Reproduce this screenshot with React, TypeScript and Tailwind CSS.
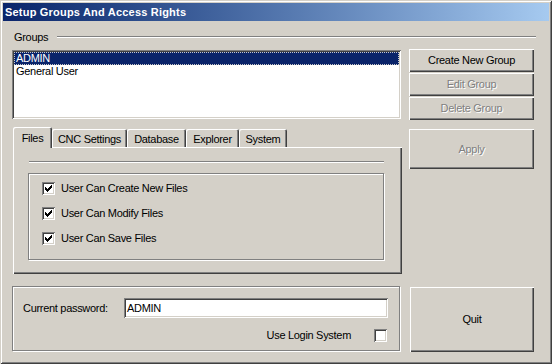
import React from "react";

const CheckMark = () => (
  <svg width="7" height="7" viewBox="0 0 7 7" shapeRendering="crispEdges">
    <path
      fill="#000"
      d="M6 0h1v1h-1z M5 1h2v1h-2z M0 2h1v1h-1z M4 2h3v1h-3z M0 3h2v1h-2z M3 3h3v1h-3z M0 4h5v1h-5z M1 5h3v1h-3z M2 6h1v1h-1z"
    />
  </svg>
);

function CheckBox({ checked }: { checked: boolean }) {
  return (
    <div className="w-[13px] h-[13px] shrink-0 bg-white shadow-[inset_1px_1px_#808080,inset_-1px_-1px_#ffffff,inset_2px_2px_#404040,inset_-2px_-2px_#d4d0c8] flex items-center justify-center">
      {checked && <CheckMark />}
    </div>
  );
}

function Btn({ label, disabled, cls }: { label: string; disabled?: boolean; cls: string }) {
  return (
    <div
      className={`flex items-center justify-center bg-[#d4d0c8] shadow-[inset_1px_1px_#ffffff,inset_-1px_-1px_#404040,inset_-2px_-2px_#808080] ${cls} ${
        disabled ? "text-[#808080] [text-shadow:1px_1px_#ffffff]" : "text-black"
      }`}
    >
      {label}
    </div>
  );
}

function Tab({ label, w }: { label: string; w: string }) {
  return (
    <div
      className={`${w} h-[18px] flex items-center justify-center pt-[3px] bg-[#d4d0c8] rounded-t-[2px] shadow-[inset_1px_1px_#ffffff,inset_-1px_0_#404040,inset_-2px_0_#808080]`}
    >
      {label}
    </div>
  );
}

export default function App() {
  return (
    <div className="w-[552px] h-[364px] bg-[#d4d0c8] p-[3px] shadow-[inset_1px_1px_#d4d0c8,inset_-1px_-1px_#404040,inset_2px_2px_#ffffff,inset_-2px_-2px_#808080] font-['Liberation_Sans',Arial,sans-serif] text-[11px] leading-[13px] tracking-[-0.3px] text-black overflow-hidden">
      {/* Title bar */}
      <div className="h-[18px] bg-linear-to-r from-[#0a246a] to-[#a6caf0] flex items-center pl-[2px] text-white font-bold text-[11px] tracking-[0.2px]">
        Setup Groups And Access Rights
      </div>

      <div className="pl-[9px]">
        {/* Groups header */}
        <div className="mt-[9px] h-[13px] w-[524px] flex items-center">
          <span className="ml-[2px] pt-[1px]">Groups</span>
          <div className="ml-[9px] flex-1 h-[2px] border-t border-b border-t-[#808080] border-b-white" />
        </div>

        {/* List + buttons */}
        <div className="mt-[6px] flex">
          <div className="mt-[1px] w-[389px] h-[69px] bg-white p-[2px] shadow-[inset_1px_1px_#808080,inset_-1px_-1px_#ffffff,inset_2px_2px_#404040,inset_-2px_-2px_#d4d0c8]">
            <div className="h-[13px] bg-[#0a246a] text-white pl-[2px] outline-1 outline-dotted outline-[#c8c8c8] -outline-offset-1 flex items-center">
              ADMIN
            </div>
            <div className="h-[13px] pl-[2px] flex items-center">General User</div>
          </div>
          <div className="ml-[8px] w-[125px] flex flex-col gap-[1px]">
            <Btn label="Create New Group" cls="h-[23px]" />
            <Btn label="Edit Group" disabled cls="h-[23px]" />
            <Btn label="Delete Group" disabled cls="h-[23px]" />
          </div>
        </div>

        {/* Tabs + Apply */}
        <div className="mt-[7px] flex items-start">
          <div className="ml-[1px] w-[389px] flex flex-col">
            <div className="h-[20px] flex items-end">
              <div className="relative z-10 w-[39px] h-[21px] -mb-[1px] flex items-center justify-center pt-[1px] bg-[#d4d0c8] rounded-t-[2px] shadow-[inset_1px_1px_#ffffff,inset_-1px_0_#404040,inset_-2px_0_#808080]">
                Files
              </div>
              <Tab label="CNC Settings" w="w-[75px]" />
              <Tab label="Database" w="w-[59px]" />
              <Tab label="Explorer" w="w-[53px]" />
              <Tab label="System" w="w-[48px]" />
            </div>
            <div className="h-[127px] bg-[#d4d0c8] shadow-[inset_1px_1px_#ffffff,inset_-1px_-1px_#404040,inset_-2px_-2px_#808080] pt-[14px] pl-[16px]">
              <div className="w-[355px] h-[2px] border-t border-b border-t-[#808080] border-b-white" />
              <div className="-ml-[1px] mt-[10px] w-[356px] h-[87px] border border-[#808080] shadow-[inset_1px_1px_#ffffff,1px_1px_#ffffff] pt-[8px] pl-[13px] flex flex-col gap-[12px]">
                {["User Can Create New Files", "User Can Modify Files", "User Can Save Files"].map((t) => (
                  <div key={t} className="h-[13px] flex items-center gap-[6px]">
                    <CheckBox checked />
                    <span>{t}</span>
                  </div>
                ))}
              </div>
            </div>
          </div>
          <Btn label="Apply" disabled cls="ml-[7px] mt-[2px] w-[125px] h-[40px]" />
        </div>

        {/* Password + Quit */}
        <div className="mt-[12px] flex items-start">
          <div className="w-[388px] h-[65px] border border-[#808080] shadow-[inset_1px_1px_#ffffff,1px_1px_#ffffff]">
            <div className="mt-[11px] flex items-center">
              <span className="pl-[10px] w-[111px] pt-[1px]">Current password:</span>
              <div className="w-[264px] h-[20px] bg-white pl-[3px] flex items-center shadow-[inset_1px_1px_#808080,inset_-1px_-1px_#ffffff,inset_2px_2px_#404040,inset_-2px_-2px_#d4d0c8]">
                ADMIN
              </div>
            </div>
            <div className="mt-[10px] flex items-center justify-end pr-[12px] gap-[23px]">
              <span className="pt-[1px]">Use Login System</span>
              <CheckBox checked={false} />
            </div>
          </div>
          <Btn label="Quit" cls="ml-[10px] mt-[1px] w-[124px] h-[65px]" />
        </div>
      </div>
    </div>
  );
}
